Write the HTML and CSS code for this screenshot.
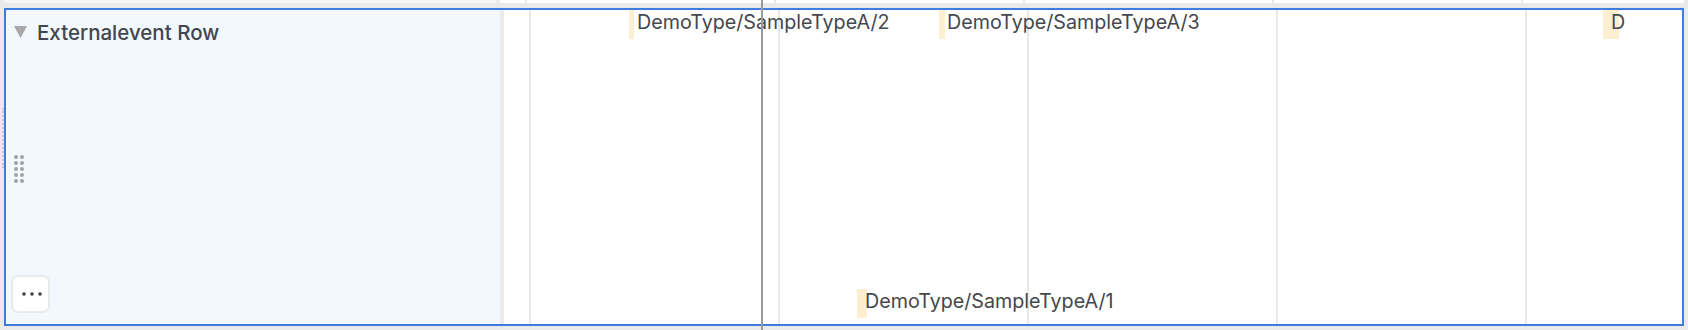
FILE: index.html
```html
<!DOCTYPE html>
<html lang="en">

<head>
    <meta charset="UTF-8">
    <meta name="viewport" content="width=device-width, initial-scale=1.0">
    <title>Timeline rows</title>
    <link rel="stylesheet" href="styles.css">
</head>

<body>
    <div class="board">
        <div class="row row-prev">
            <div class="row-head"></div>
            <div class="row-track"></div>
        </div>

        <div class="row row-selected">
            <div class="row-head">
                <div class="row-title">
                    <svg class="caret" width="13" height="12" viewBox="0 0 13 12">
                        <path d="M0 0 H13 L6.5 12 Z" fill="#a9a9a9" />
                    </svg>
                    <span>Externalevent Row</span>
                </div>
                <svg class="drag-handle" width="10" height="28" viewBox="0 0 10 28">
                    <g fill="#a3a3a3">
                        <circle cx="2" cy="2" r="2" /><circle cx="8" cy="2" r="2" />
                        <circle cx="2" cy="8" r="2" /><circle cx="8" cy="8" r="2" />
                        <circle cx="2" cy="14" r="2" /><circle cx="8" cy="14" r="2" />
                        <circle cx="2" cy="20" r="2" /><circle cx="8" cy="20" r="2" />
                        <circle cx="2" cy="26" r="2" /><circle cx="8" cy="26" r="2" />
                    </g>
                </svg>
                <button class="more-btn" type="button">
                    <svg width="20" height="4" viewBox="0 0 20 4">
                        <g fill="#3b3f46">
                            <circle cx="2" cy="2" r="1.8" />
                            <circle cx="10" cy="2" r="1.8" />
                            <circle cx="18" cy="2" r="1.8" />
                        </g>
                    </svg>
                </button>
            </div>

            <div class="row-track">
                <!-- left = start on the time axis, width = duration -->
                <div class="event" style="left: 125px; top: 0;">
                    <span class="event-bar" style="width: 5px;"></span>
                    <span class="event-label">DemoType/SampleTypeA/2</span>
                </div>
                <div class="event" style="left: 435px; top: 0;">
                    <span class="event-bar" style="width: 6px;"></span>
                    <span class="event-label">DemoType/SampleTypeA/3</span>
                </div>
                <div class="event" style="left: 1099px; top: 0;">
                    <span class="event-bar" style="width: 16px;"></span>
                    <span class="event-label">D</span>
                </div>
                <div class="event" style="left: 353px; top: 279px;">
                    <span class="event-bar" style="width: 10px;"></span>
                    <span class="event-label">DemoType/SampleTypeA/1</span>
                </div>
            </div>
        </div>

        <div class="resize-grip"></div>
        <div class="cursor-line"></div>
    </div>
</body>

</html>
```

FILE: styles.css
```css
* {
    box-sizing: border-box;
    font-family: Inter, 'Liberation Sans', Arial, sans-serif;
}

body {
    margin: 0;
    background-color: #e9eae9;
}

.board {
    position: relative;
    height: 330px;
    overflow: hidden;
}

.row {
    display: flex;
    margin: 0 4px;
}

.row-head {
    width: 498px;
    border-right: 4px solid #ebebeb;
    background-color: #f3f7fe;
}

.row-track {
    position: relative;
    flex: 1;
    background-color: #fff;
    background-image: repeating-linear-gradient(to right,
            transparent 0, transparent 25px,
            #e8e8e8 25px, #e8e8e8 27px,
            transparent 27px, transparent 249px);
}

/* row above, only its bottom edge is visible */
.row-prev {
    height: 3px;
    margin-bottom: 5px;
}

.row-prev .row-head {
    width: 496px;
    background-color: #f6f6f6;
}

.row-selected {
    height: 318px;
    border: 2px solid #3e7ddf;
}

.row-selected .row-head {
    display: flex;
    flex-direction: column;
    align-items: flex-start;
    padding: 10px 0 11px 5px;
}

.row-title {
    display: flex;
    align-items: center;
    gap: 10px;
    height: 24px;
    padding-left: 3px;
    font-size: 20.5px;
    font-weight: 500;
    color: #42464d;
}

.drag-handle {
    display: block;
    margin: 111px 0 0 3px;
}

.more-btn {
    display: flex;
    align-items: center;
    justify-content: center;
    width: 39px;
    height: 38px;
    margin-top: auto;
    padding: 0 0 0 2px;
    border: 2px solid #e8eaec;
    border-radius: 7px;
    background-color: #fff;
}

.event {
    position: absolute;
    display: flex;
}

.event-bar {
    height: 29px;
    background-color: #fcefcf;
}

.event-label {
    position: absolute;
    left: 8px;
    top: 1px;
    font-size: 19.7px;
    line-height: 22px;
    color: #44474c;
    white-space: nowrap;
}

.resize-grip {
    position: absolute;
    left: 2px;
    top: 108px;
    height: 60px;
    border-left: 2px dotted #c9c9c9;
}

.cursor-line {
    position: absolute;
    left: 761px;
    top: 0;
    width: 2px;
    height: 100%;
    background-color: #9a9a9a;
}
```
